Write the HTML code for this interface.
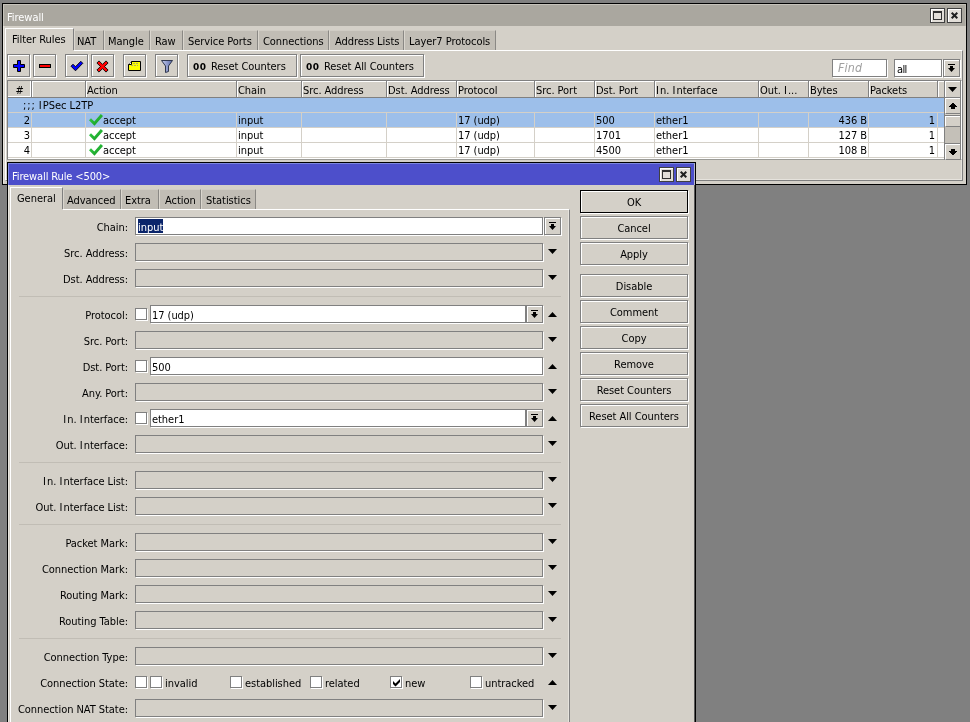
<!DOCTYPE html><html><head><meta charset="utf-8"><title>Firewall</title><style>
*{box-sizing:border-box;margin:0;padding:0}
html,body{width:970px;height:722px;overflow:hidden;background:#808080}
body{position:relative;font-family:"DejaVu Sans Condensed","Liberation Sans",sans-serif;font-size:11px;letter-spacing:-0.05px;color:#000;line-height:13px;white-space:nowrap}
.a{position:absolute}
.t{position:absolute;height:13px;line-height:13px;will-change:transform}
.r{text-align:right}
.c{text-align:center}
.win{position:absolute;border:1px solid #000;background:#d4d0c8;overflow:hidden}
.btn{position:absolute;border:1px solid #808080;box-shadow:1px 1px 0 #ffffff,inset 1px 1px 0 #ffffff;background:#d4d0c8;text-align:center}
.inp{position:absolute;border:1px solid #808080;box-shadow:1px 1px 0 #ffffff;background:#d4d0c8;height:18px}
.inp.on{background:#fff}
.cb{position:absolute;border:1px solid #808080;box-shadow:1px 1px 0 #ffffff;background:#fff;width:12px;height:12px}
.tab{position:absolute;background:#c1bdb5;border-top:1px solid #d0ccc4;border-left:1px solid #dad6ce;border-right:1px solid #8a8884}
.tab.sel{background:#d4d0c8;border-top:1px solid #ffffff;border-left:1px solid #ffffff;border-right:1px solid #808080}
.panel{position:absolute;border-top:1px solid #ffffff;border-left:1px solid #ffffff;border-right:1px solid #808080;border-bottom:1px solid #808080;box-shadow:inset -1px -1px 0 #e6e3dd}
.tb{position:absolute;width:15px;height:15px;border:1px solid #404040;background:#e2ded8;box-shadow:inset 1px 1px 0 #fff}
.sep{position:absolute;height:1px;background:#c1bdb5}
.hc{position:absolute;top:81px;height:16px;border-right:1px solid #808080;box-shadow:inset 1px 1px 0 #ffffff}
.gl{position:absolute;background:#d4d0c8}
svg{position:absolute;overflow:visible}
</style></head><body>
<div class="win" style="left:2px;top:3px;width:965px;height:182px"></div>
<div class="a" style="left:3px;top:4px;width:963px;height:180px;border:1px solid #e6e3dd;border-right-color:#d4d0c8;border-bottom-color:#d4d0c8"></div>
<div class="a" style="left:3px;top:4px;width:963px;height:22px;background:#aaa79f;border-top:1px solid #c6c3bb;border-left:1px solid #c6c3bb;border-right:1px solid #bab7af"></div>
<div class="t " style="left:7px;top:11px;color:#fff">Firewall</div>
<div class="tb" style="left:930px;top:8px"></div>
<div class="a" style="left:933px;top:11px;width:9px;height:9px;border:1px solid #303030;border-top-width:2px"></div>
<div class="tb" style="left:947px;top:8px"></div>
<svg style="left:951px;top:12px" width="7" height="7" viewBox="0 0 7 7"><path d="M0.7 0.7L6.3 6.3M6.3 0.7L0.7 6.3" stroke="#202020" stroke-width="2"/></svg>
<div class="panel" style="left:5px;top:50px;width:958px;height:131px"></div>
<div class="tab sel" style="left:5px;top:28px;width:69px;height:22px"></div>
<div class="a" style="left:6px;top:50px;width:68px;height:1px;background:#d4d0c8"></div>
<div class="t " style="left:12px;top:33px;">Filter Rules</div>
<div class="tab" style="left:74px;top:30px;width:30px;height:20px"></div>
<div class="t " style="left:77px;top:35px;">NAT</div>
<div class="tab" style="left:104px;top:30px;width:46px;height:20px"></div>
<div class="t " style="left:108.3px;top:35px;">Mangle</div>
<div class="tab" style="left:150px;top:30px;width:33px;height:20px"></div>
<div class="t " style="left:154.5px;top:35px;">Raw</div>
<div class="tab" style="left:183px;top:30px;width:75px;height:20px"></div>
<div class="t " style="left:188.3px;top:35px;">Service Ports</div>
<div class="tab" style="left:258px;top:30px;width:71px;height:20px"></div>
<div class="t " style="left:263px;top:35px;">Connections</div>
<div class="tab" style="left:329px;top:30px;width:75px;height:20px"></div>
<div class="t " style="left:334.5px;top:35px;">Address Lists</div>
<div class="tab" style="left:404px;top:30px;width:92px;height:20px"></div>
<div class="t " style="left:408.5px;top:35px;">Layer7 Protocols</div>
<div class="btn" style="left:7px;top:54px;width:23px;height:23px;"></div>
<div class="btn" style="left:33px;top:54px;width:23px;height:23px;"></div>
<div class="btn" style="left:65px;top:54px;width:23px;height:23px;"></div>
<div class="btn" style="left:91px;top:54px;width:23px;height:23px;"></div>
<div class="btn" style="left:123px;top:54px;width:23px;height:23px;"></div>
<div class="btn" style="left:155px;top:54px;width:23px;height:23px;"></div>
<div class="btn" style="left:187px;top:54px;width:110px;height:23px;"></div>
<div class="btn" style="left:300px;top:54px;width:124px;height:23px;"></div>
<svg style="left:13px;top:60px" width="12" height="12" viewBox="0 0 12 12"><path d="M4.5 0.5h3v4h4v3h-4v4h-3v-4h-4v-3h4z" fill="#0000ff" stroke="#000" stroke-width="1"/></svg>
<svg style="left:39px;top:64px" width="12" height="4" viewBox="0 0 12 4"><rect x="0.5" y="0.5" width="11" height="3" fill="#ff0000" stroke="#000" stroke-width="1"/></svg>
<svg style="left:65px;top:54px" width="23" height="23" viewBox="65 54 23 23"><path d="M71 66.2L73 64.2L75.5 66.7L80.8 61.3L82.8 63.3L75.5 70.8Z" fill="#0000ff" stroke="#000" stroke-width="0.9" stroke-linejoin="miter"/></svg>
<svg style="left:91px;top:54px" width="23" height="23" viewBox="91 54 23 23"><path d="M99 60.9L102.5 64.4L106 60.9L108.1 63L104.6 66.5L108.1 70L106 72.1L102.5 68.6L99 72.1L96.9 70L100.4 66.5L96.9 63Z" fill="#ff0000" stroke="#000" stroke-width="0.9"/></svg>
<svg style="left:123px;top:54px" width="23" height="23" viewBox="123 54 23 23"><path d="M131.5 61.5H140.5V70.5H128.5V64.5Z" fill="#ffff00" stroke="#000" stroke-width="1"/><path d="M131.5 61.5V64.5H128.5" fill="#fff" stroke="#000" stroke-width="1"/><path d="M133 63.5h5M131 65.5h7" stroke="#b0b060" stroke-width="1" stroke-dasharray="2 1"/></svg>
<svg style="left:155px;top:54px" width="23" height="23" viewBox="155 54 23 23"><defs><linearGradient id="fg" x1="0" x2="1"><stop offset="0" stop-color="#c8d0f0"/><stop offset="1" stop-color="#5868a8"/></linearGradient></defs><path d="M161.5 60.5H172.5L168.5 66V71.5L165.5 72.5V66Z" fill="url(#fg)" stroke="#303850" stroke-width="1"/></svg>
<div class="t " style="left:193px;top:61px;font-family:'DejaVu Sans',sans-serif;font-weight:bold;font-size:9px;letter-spacing:0.6px">00</div>
<div class="t " style="left:211px;top:60px;">Reset Counters</div>
<div class="t " style="left:306px;top:61px;font-family:'DejaVu Sans',sans-serif;font-weight:bold;font-size:9px;letter-spacing:0.6px">00</div>
<div class="t " style="left:324px;top:60px;">Reset All Counters</div>
<div class="inp on" style="left:832px;top:59px;width:55px"></div>
<div class="t " style="left:838px;top:62px;color:#a0a0a0;font-style:italic;font-size:12.3px;letter-spacing:0.2px">Find</div>
<div class="inp on" style="left:894px;top:59px;width:48px"></div>
<div class="t " style="left:896.5px;top:63px;letter-spacing:-0.6px">all</div>
<div class="btn" style="left:943px;top:59px;width:17px;height:18px;"></div>
<svg style="left:948px;top:64px" width="7" height="8" viewBox="0 0 7 8"><path d="M0 0h7v1h-7zM2 2h3v2h2L3.5 8 0 4h2z" fill="#000"/></svg>
<div class="a" style="left:7px;top:80px;width:955px;height:80px;background:#fff;border:1px solid #808080;border-right-color:#fff;border-bottom-color:#9a9a96"></div>
<div class="a" style="left:8px;top:81px;width:953px;height:17px;background:#d4d0c8;border-bottom:1px solid #808080"></div>
<div class="hc" style="left:8px;width:24px;box-shadow:inset -1px -1px 0 #fff"></div>
<div class="t c" style="left:8px;top:84px;width:23px;">#</div>
<div class="hc" style="left:32px;width:54px"></div>
<div class="hc" style="left:86px;width:151px"></div>
<div class="t " style="left:87px;top:84px;">Action</div>
<div class="hc" style="left:237px;width:65px"></div>
<div class="t " style="left:238px;top:84px;">Chain</div>
<div class="hc" style="left:302px;width:85px"></div>
<div class="t " style="left:303px;top:84px;">Src. Address</div>
<div class="hc" style="left:387px;width:70px"></div>
<div class="t " style="left:388px;top:84px;">Dst. Address</div>
<div class="hc" style="left:457px;width:78px"></div>
<div class="t " style="left:458px;top:84px;">Protocol</div>
<div class="hc" style="left:535px;width:60px"></div>
<div class="t " style="left:536px;top:84px;">Src. Port</div>
<div class="hc" style="left:595px;width:60px"></div>
<div class="t " style="left:596px;top:84px;">Dst. Port</div>
<div class="hc" style="left:655px;width:104px"></div>
<div class="t " style="left:656px;top:84px;"><span style="letter-spacing:1.1px">I</span>n. <span style="letter-spacing:1.1px">I</span>nterface</div>
<div class="hc" style="left:759px;width:50px"></div>
<div class="t " style="left:760px;top:84px;">Out. <span style="letter-spacing:1.1px">I</span>...</div>
<div class="hc" style="left:809px;width:60px"></div>
<div class="t " style="left:810px;top:84px;">Bytes</div>
<div class="hc" style="left:869px;width:69px"></div>
<div class="t " style="left:870px;top:84px;">Packets</div>
<div class="hc" style="left:938px;width:7px"></div>
<div class="hc" style="left:945px;width:16px"></div>
<svg style="left:948px;top:87px" width="9" height="5" viewBox="0 0 9 5"><path d="M0 0h9L4.5 5z" fill="#000"/></svg>
<div class="a" style="left:8px;top:98px;width:936px;height:14px;background:#9dbfea"></div>
<div class="a" style="left:8px;top:113px;width:936px;height:14px;background:#9dbfea"></div>
<div class="gl" style="left:8px;top:112px;width:936px;height:1px"></div>
<div class="gl" style="left:8px;top:127px;width:936px;height:1px"></div>
<div class="gl" style="left:8px;top:142px;width:936px;height:1px"></div>
<div class="gl" style="left:8px;top:157px;width:936px;height:1px"></div>
<div class="gl" style="left:31px;top:113px;width:1px;height:45px"></div>
<div class="gl" style="left:85px;top:113px;width:1px;height:45px"></div>
<div class="gl" style="left:236px;top:113px;width:1px;height:45px"></div>
<div class="gl" style="left:301px;top:113px;width:1px;height:45px"></div>
<div class="gl" style="left:386px;top:113px;width:1px;height:45px"></div>
<div class="gl" style="left:456px;top:113px;width:1px;height:45px"></div>
<div class="gl" style="left:534px;top:113px;width:1px;height:45px"></div>
<div class="gl" style="left:594px;top:113px;width:1px;height:45px"></div>
<div class="gl" style="left:654px;top:113px;width:1px;height:45px"></div>
<div class="gl" style="left:758px;top:113px;width:1px;height:45px"></div>
<div class="gl" style="left:808px;top:113px;width:1px;height:45px"></div>
<div class="gl" style="left:868px;top:113px;width:1px;height:45px"></div>
<div class="gl" style="left:937px;top:113px;width:1px;height:45px"></div>
<div class="t " style="left:23px;top:99px;"><span style="letter-spacing:0.9px">;;;</span> <span style="letter-spacing:1.1px">I</span>PSec L2TP</div>
<div class="t r" style="left:8px;top:114px;width:22px;">2</div>
<svg style="left:88px;top:112px" width="16" height="14" viewBox="88 112 16 14"><defs><linearGradient id="g2" x1="0" y1="0" x2="1" y2="1"><stop offset="0" stop-color="#38d848"/><stop offset="1" stop-color="#109020"/></linearGradient></defs><path d="M89 120.3L91 118.3L94.3 121.5L100.8 114L103 116L94.5 125.8Z" fill="url(#g2)"/></svg>
<div class="t " style="left:103px;top:114px;">accept</div>
<div class="t " style="left:238px;top:114px;">input</div>
<div class="t " style="left:458px;top:114px;">17 (udp)</div>
<div class="t " style="left:596px;top:114px;">500</div>
<div class="t " style="left:656px;top:114px;">ether1</div>
<div class="t r" style="left:809px;top:114px;width:58px;">436 B</div>
<div class="t r" style="left:869px;top:114px;width:66px;">1</div>
<div class="t r" style="left:8px;top:129px;width:22px;">3</div>
<svg style="left:88px;top:127px" width="16" height="14" viewBox="88 112 16 14"><defs><linearGradient id="g3" x1="0" y1="0" x2="1" y2="1"><stop offset="0" stop-color="#38d848"/><stop offset="1" stop-color="#109020"/></linearGradient></defs><path d="M89 120.3L91 118.3L94.3 121.5L100.8 114L103 116L94.5 125.8Z" fill="url(#g3)"/></svg>
<div class="t " style="left:103px;top:129px;">accept</div>
<div class="t " style="left:238px;top:129px;">input</div>
<div class="t " style="left:458px;top:129px;">17 (udp)</div>
<div class="t " style="left:596px;top:129px;">1701</div>
<div class="t " style="left:656px;top:129px;">ether1</div>
<div class="t r" style="left:809px;top:129px;width:58px;">127 B</div>
<div class="t r" style="left:869px;top:129px;width:66px;">1</div>
<div class="t r" style="left:8px;top:144px;width:22px;">4</div>
<svg style="left:88px;top:142px" width="16" height="14" viewBox="88 112 16 14"><defs><linearGradient id="g4" x1="0" y1="0" x2="1" y2="1"><stop offset="0" stop-color="#38d848"/><stop offset="1" stop-color="#109020"/></linearGradient></defs><path d="M89 120.3L91 118.3L94.3 121.5L100.8 114L103 116L94.5 125.8Z" fill="url(#g4)"/></svg>
<div class="t " style="left:103px;top:144px;">accept</div>
<div class="t " style="left:238px;top:144px;">input</div>
<div class="t " style="left:458px;top:144px;">17 (udp)</div>
<div class="t " style="left:596px;top:144px;">4500</div>
<div class="t " style="left:656px;top:144px;">ether1</div>
<div class="t r" style="left:809px;top:144px;width:58px;">108 B</div>
<div class="t r" style="left:869px;top:144px;width:66px;">1</div>
<div class="a" style="left:944px;top:98px;width:17px;height:62px;background:#c4c0b8;border-left:1px solid #808080;border-right:1px solid #808080"></div>
<div class="a" style="left:945px;top:98px;width:15px;height:16px;background:#d4d0c8;border-top:1px solid #fff;border-left:1px solid #fff;border-bottom:1px solid #808080"></div>
<div class="a" style="left:945px;top:115px;width:15px;height:1px;background:#808080"></div>
<div class="a" style="left:945px;top:116px;width:15px;height:11px;background:#d4d0c8;border-top:1px solid #fff;border-left:1px solid #fff;border-bottom:1px solid #808080"></div>
<div class="a" style="left:945px;top:143px;width:15px;height:1px;background:#808080"></div>
<div class="a" style="left:945px;top:144px;width:15px;height:16px;background:#d4d0c8;border-top:1px solid #fff;border-left:1px solid #fff;border-bottom:1px solid #808080"></div>
<div class="a" style="left:945px;top:114px;width:15px;height:1px;background:#d8d4cc"></div>
<svg style="left:949px;top:103px" width="8" height="6" viewBox="0 0 8 6" shape-rendering="crispEdges"><path d="M3 0h2v1h1v1h1v1h1v1h-2v2h-4v-2h-2v-1h1v-1h1v-1h1z" fill="#000"/></svg>
<svg style="left:949px;top:149px" width="8" height="6" viewBox="0 0 8 6" shape-rendering="crispEdges"><path d="M2 0h4v2h2v1h-1v1h-1v1h-1v1h-2v-1h-1v-1h-1v-1h-1v-1h2z" fill="#000"/></svg>
<div class="win" style="left:7px;top:162px;width:689px;height:600px"></div>
<div class="a" style="left:8px;top:163px;width:687px;height:22px;background:#4d4fcb;border-top:1px solid #7c86de;border-left:1px solid #7c86de;border-right:1px solid #b8b8c8"></div>
<div class="t " style="left:12px;top:170px;color:#fff;letter-spacing:-0.12px">Firewall Rule &lt;500&gt;</div>
<div class="tb" style="left:659px;top:167px"></div>
<div class="a" style="left:662px;top:170px;width:9px;height:9px;border:1px solid #303030;border-top-width:2px"></div>
<div class="tb" style="left:676px;top:167px"></div>
<svg style="left:680px;top:171px" width="7" height="7" viewBox="0 0 7 7"><path d="M0.7 0.7L6.3 6.3M6.3 0.7L0.7 6.3" stroke="#202020" stroke-width="2"/></svg>
<div class="a" style="left:8px;top:185px;width:1px;height:540px;background:#e8e5de"></div>
<div class="a" style="left:694px;top:185px;width:1px;height:540px;background:#585858"></div>
<div class="panel" style="left:10px;top:209px;width:560px;height:560px"></div>
<div class="tab sel" style="left:10px;top:187px;width:53px;height:22px"></div>
<div class="a" style="left:11px;top:209px;width:52px;height:1px;background:#d4d0c8"></div>
<div class="t " style="left:17.3px;top:192px;">General</div>
<div class="tab" style="left:63px;top:189px;width:58px;height:20px"></div>
<div class="t " style="left:67px;top:194px;">Advanced</div>
<div class="tab" style="left:121px;top:189px;width:38px;height:20px"></div>
<div class="t " style="left:125.3px;top:194px;">Extra</div>
<div class="tab" style="left:159px;top:189px;width:42px;height:20px"></div>
<div class="t " style="left:164.5px;top:194px;">Action</div>
<div class="tab" style="left:201px;top:189px;width:55px;height:20px"></div>
<div class="t " style="left:206.3px;top:194px;">Statistics</div>
<div class="btn" style="left:580px;top:190px;width:108px;height:23px;border-color:#000;"></div>
<div class="t c" style="left:580px;top:196px;width:108px;">OK</div>
<div class="btn" style="left:580px;top:216px;width:108px;height:23px;"></div>
<div class="t c" style="left:580px;top:222px;width:108px;">Cancel</div>
<div class="btn" style="left:580px;top:242px;width:108px;height:23px;"></div>
<div class="t c" style="left:580px;top:248px;width:108px;">Apply</div>
<div class="btn" style="left:580px;top:274px;width:108px;height:23px;"></div>
<div class="t c" style="left:580px;top:280px;width:108px;">Disable</div>
<div class="btn" style="left:580px;top:300px;width:108px;height:23px;"></div>
<div class="t c" style="left:580px;top:306px;width:108px;">Comment</div>
<div class="btn" style="left:580px;top:326px;width:108px;height:23px;"></div>
<div class="t c" style="left:580px;top:332px;width:108px;">Copy</div>
<div class="btn" style="left:580px;top:352px;width:108px;height:23px;"></div>
<div class="t c" style="left:580px;top:358px;width:108px;">Remove</div>
<div class="btn" style="left:580px;top:378px;width:108px;height:23px;"></div>
<div class="t c" style="left:580px;top:384px;width:108px;">Reset Counters</div>
<div class="btn" style="left:580px;top:404px;width:108px;height:23px;"></div>
<div class="t c" style="left:580px;top:410px;width:108px;">Reset All Counters</div>
<div class="t r" style="left:13px;top:221px;width:115px;">Chain:</div>
<div class="inp on" style="left:135px;top:217px;width:408px"></div>
<div class="a" style="left:138px;top:219px;width:25px;height:14px;background:#0a246a"></div>
<div class="t " style="left:138px;top:221px;color:#fff">input</div>
<div class="btn" style="left:544px;top:217px;width:17px;height:18px;"></div>
<svg style="left:549px;top:222px" width="7" height="8" viewBox="0 0 7 8"><path d="M0 0h7v1h-7zM2 2h3v2h2L3.5 8 0 4h2z" fill="#000"/></svg>
<div class="t r" style="left:13px;top:247px;width:115px;">Src. Address:</div>
<div class="inp" style="left:135px;top:243px;width:408px"></div>
<svg style="left:548px;top:249px" width="9" height="5" viewBox="0 0 9 5"><path d="M0 0h9L4.5 5z" fill="#000"/></svg>
<div class="t r" style="left:13px;top:273px;width:115px;">Dst. Address:</div>
<div class="inp" style="left:135px;top:269px;width:408px"></div>
<svg style="left:548px;top:275px" width="9" height="5" viewBox="0 0 9 5"><path d="M0 0h9L4.5 5z" fill="#000"/></svg>
<div class="sep" style="left:19px;top:296px;width:542px"></div>
<div class="t r" style="left:13px;top:309px;width:115px;">Protocol:</div>
<div class="cb" style="left:135px;top:308px"></div>
<div class="inp on" style="left:150px;top:305px;width:376px"></div>
<div class="t " style="left:152px;top:309px;">17 (udp)</div>
<div class="btn" style="left:526px;top:305px;width:17px;height:18px;"></div>
<svg style="left:531px;top:310px" width="7" height="8" viewBox="0 0 7 8"><path d="M0 0h7v1h-7zM2 2h3v2h2L3.5 8 0 4h2z" fill="#000"/></svg>
<svg style="left:548px;top:312px" width="9" height="5" viewBox="0 0 9 5"><path d="M0 5h9L4.5 0z" fill="#000"/></svg>
<div class="t r" style="left:13px;top:335px;width:115px;">Src. Port:</div>
<div class="inp" style="left:135px;top:331px;width:408px"></div>
<svg style="left:548px;top:337px" width="9" height="5" viewBox="0 0 9 5"><path d="M0 0h9L4.5 5z" fill="#000"/></svg>
<div class="t r" style="left:13px;top:361px;width:115px;">Dst. Port:</div>
<div class="cb" style="left:135px;top:360px"></div>
<div class="inp on" style="left:150px;top:357px;width:393px"></div>
<div class="t " style="left:152px;top:361px;">500</div>
<svg style="left:548px;top:364px" width="9" height="5" viewBox="0 0 9 5"><path d="M0 5h9L4.5 0z" fill="#000"/></svg>
<div class="t r" style="left:13px;top:387px;width:115px;">Any. Port:</div>
<div class="inp" style="left:135px;top:383px;width:408px"></div>
<svg style="left:548px;top:389px" width="9" height="5" viewBox="0 0 9 5"><path d="M0 0h9L4.5 5z" fill="#000"/></svg>
<div class="t r" style="left:13px;top:413px;width:115px;"><span style="letter-spacing:1.1px">I</span>n. <span style="letter-spacing:1.1px">I</span>nterface:</div>
<div class="cb" style="left:135px;top:412px"></div>
<div class="inp on" style="left:150px;top:409px;width:376px"></div>
<div class="t " style="left:152px;top:413px;">ether1</div>
<div class="btn" style="left:526px;top:409px;width:17px;height:18px;"></div>
<svg style="left:531px;top:414px" width="7" height="8" viewBox="0 0 7 8"><path d="M0 0h7v1h-7zM2 2h3v2h2L3.5 8 0 4h2z" fill="#000"/></svg>
<svg style="left:548px;top:416px" width="9" height="5" viewBox="0 0 9 5"><path d="M0 5h9L4.5 0z" fill="#000"/></svg>
<div class="t r" style="left:13px;top:439px;width:115px;">Out. <span style="letter-spacing:1.1px">I</span>nterface:</div>
<div class="inp" style="left:135px;top:435px;width:408px"></div>
<svg style="left:548px;top:441px" width="9" height="5" viewBox="0 0 9 5"><path d="M0 0h9L4.5 5z" fill="#000"/></svg>
<div class="sep" style="left:19px;top:462px;width:542px"></div>
<div class="t r" style="left:13px;top:475px;width:115px;"><span style="letter-spacing:1.1px">I</span>n. <span style="letter-spacing:1.1px">I</span>nterface List:</div>
<div class="inp" style="left:135px;top:471px;width:408px"></div>
<svg style="left:548px;top:477px" width="9" height="5" viewBox="0 0 9 5"><path d="M0 0h9L4.5 5z" fill="#000"/></svg>
<div class="t r" style="left:13px;top:501px;width:115px;">Out. <span style="letter-spacing:1.1px">I</span>nterface List:</div>
<div class="inp" style="left:135px;top:497px;width:408px"></div>
<svg style="left:548px;top:503px" width="9" height="5" viewBox="0 0 9 5"><path d="M0 0h9L4.5 5z" fill="#000"/></svg>
<div class="sep" style="left:19px;top:524px;width:542px"></div>
<div class="t r" style="left:13px;top:537px;width:115px;">Packet Mark:</div>
<div class="inp" style="left:135px;top:533px;width:408px"></div>
<svg style="left:548px;top:539px" width="9" height="5" viewBox="0 0 9 5"><path d="M0 0h9L4.5 5z" fill="#000"/></svg>
<div class="t r" style="left:13px;top:563px;width:115px;">Connection Mark:</div>
<div class="inp" style="left:135px;top:559px;width:408px"></div>
<svg style="left:548px;top:565px" width="9" height="5" viewBox="0 0 9 5"><path d="M0 0h9L4.5 5z" fill="#000"/></svg>
<div class="t r" style="left:13px;top:589px;width:115px;">Routing Mark:</div>
<div class="inp" style="left:135px;top:585px;width:408px"></div>
<svg style="left:548px;top:591px" width="9" height="5" viewBox="0 0 9 5"><path d="M0 0h9L4.5 5z" fill="#000"/></svg>
<div class="t r" style="left:13px;top:615px;width:115px;">Routing Table:</div>
<div class="inp" style="left:135px;top:611px;width:408px"></div>
<svg style="left:548px;top:617px" width="9" height="5" viewBox="0 0 9 5"><path d="M0 0h9L4.5 5z" fill="#000"/></svg>
<div class="sep" style="left:19px;top:638px;width:542px"></div>
<div class="t r" style="left:13px;top:651px;width:115px;">Connection Type:</div>
<div class="inp" style="left:135px;top:647px;width:408px"></div>
<svg style="left:548px;top:653px" width="9" height="5" viewBox="0 0 9 5"><path d="M0 0h9L4.5 5z" fill="#000"/></svg>
<div class="t r" style="left:13px;top:677px;width:115px;">Connection State:</div>
<div class="cb" style="left:135px;top:676px"></div>
<div class="cb" style="left:150px;top:676px"></div>
<div class="cb" style="left:230px;top:676px"></div>
<div class="cb" style="left:310px;top:676px"></div>
<div class="cb" style="left:390px;top:676px"></div>
<div class="cb" style="left:470px;top:676px"></div>
<div class="t " style="left:165px;top:677px;">invalid</div>
<div class="t " style="left:245px;top:677px;">established</div>
<div class="t " style="left:325px;top:677px;">related</div>
<div class="t " style="left:405px;top:677px;">new</div>
<div class="t " style="left:485px;top:677px;">untracked</div>
<svg style="left:390px;top:676px" width="12" height="12" viewBox="390 676 12 12"><path d="M393 681L395.5 683.5L400 679V682L395.5 686.5L393 684Z" fill="#000"/></svg>
<svg style="left:548px;top:680px" width="9" height="5" viewBox="0 0 9 5"><path d="M0 5h9L4.5 0z" fill="#000"/></svg>
<div class="t r" style="left:13px;top:703px;width:115px;">Connection NAT State:</div>
<div class="inp" style="left:135px;top:699px;width:408px"></div>
<svg style="left:548px;top:705px" width="9" height="5" viewBox="0 0 9 5"><path d="M0 0h9L4.5 5z" fill="#000"/></svg>
</body></html>
